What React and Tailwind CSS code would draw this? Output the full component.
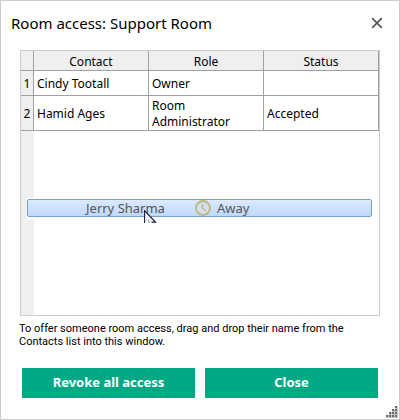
const rows = [
  { contact: "Cindy Tootall", role: "Owner", status: "", height: "h-[25px]" },
  { contact: "Hamid Ages", role: "Room Administrator", status: "Accepted", height: "h-[35px]" },
];

const gripDots = [
  [9, 0],
  [6, 3], [9, 3],
  [3, 6], [6, 6], [9, 6],
  [0, 9], [3, 9], [6, 9], [9, 9],
];

function CloseIcon() {
  return (
    <svg width="12" height="12" viewBox="0 0 12 12" aria-hidden="true">
      <path d="M1.2 1.2L10.8 10.8M10.8 1.2L1.2 10.8" stroke="#555" strokeWidth="1.7" fill="none" />
    </svg>
  );
}

function ClockIcon() {
  return (
    <svg width="16" height="16" viewBox="0 0 16 16" aria-hidden="true">
      <circle cx="8" cy="8" r="7" fill="#d3e0ef" stroke="#bdb879" strokeWidth="1.8" />
      <path d="M7.5 4V8.5L11 11" fill="none" stroke="#bdb879" strokeWidth="1.3" />
    </svg>
  );
}

function Pointer() {
  return (
    <svg className="absolute left-[117px] top-[12px]" width="13" height="13" viewBox="0 0 13 13" aria-hidden="true">
      <path d="M0.5 0.5L11.5 12.5H5L4 10L0.5 13Z" fill="#eef0f8" />
      <path d="M0.5 13V0.5L11.5 12.2H7.500" fill="none" stroke="#222238" strokeWidth="1.2" />
      <path d="M4 10L5.5 13" fill="none" stroke="#8a8a98" strokeWidth="1" />
    </svg>
  );
}

function DragPreview() {
  return (
    <div className="absolute left-[6px] right-[7px] top-[147px] h-[22px] bg-white pt-px">
      <div className="flex h-[18px] items-center rounded-[2px] border border-[#7f9fd3] bg-linear-to-b from-[#dceaff] to-[#bfd8fb] pl-[58px] text-[13px] leading-[16px] text-[#555]">
        <span className="w-[109px]">Jerry Sharma</span>
        <ClockIcon />
        <span className="pl-[6px]">Away</span>
      </div>
      <Pointer />
    </div>
  );
}

function AccessTable() {
  return (
    <table className="w-full table-fixed border-separate border-spacing-0 text-left leading-[16px]">
      <colgroup>
        <col className="w-[13px]" />
        <col />
        <col />
        <col />
      </colgroup>
      <thead>
        <tr className="h-[20px] bg-[#efefef]">
          <td className="border-r border-b border-[#a0a0a0] p-0" />
          {["Contact", "Role", "Status"].map((name) => (
            <th key={name} scope="col" className="border-r border-b border-[#a0a0a0] px-0 pt-[2px] pb-0 text-center font-normal">
              {name}
            </th>
          ))}
        </tr>
      </thead>
      <tbody>
        {rows.map((row, i) => (
          <tr key={row.contact} className={row.height}>
            <th scope="row" className="border-r border-b border-[#a0a0a0] bg-[#efefef] px-0 pt-[2px] pb-0 text-center font-normal">
              {i + 1}
            </th>
            {[row.contact, row.role, row.status].map((text, column) => (
              <td key={column} className="border-r border-b border-[#a0a0a0] pt-[2px] pr-0 pb-0 pl-[3px]">
                {text}
              </td>
            ))}
          </tr>
        ))}
      </tbody>
    </table>
  );
}

export default function App() {
  return (
    <main className="relative flex min-h-screen flex-col border border-[#cccccc] bg-white font-['Noto_Sans',sans-serif] text-[12px] text-black">
      <header className="flex items-center justify-between pt-[9px] pr-[16px] pl-[10px]">
        <h1 className="text-[15px] leading-[26px]">Room access: Support Room</h1>
        <button type="button" aria-label="Close window">
          <CloseIcon />
        </button>
      </header>

      <section className="relative mx-[19px] mt-[14px] flex h-[266px] flex-col border border-[#cccccc]">
        <AccessTable />
        <div className="w-[13px] grow bg-[#efefef]" />
        <DragPreview />
      </section>

      <p className="mt-[6px] mr-[40px] ml-[18px] font-[Roboto,sans-serif] text-[11px] leading-[13px]">
        To offer someone room access, drag and drop their name from the Contacts list into this window.
      </p>

      <div className="mt-[20px] grid grid-cols-2 gap-[10px] px-[21px] text-[13px] font-bold text-white">
        <button type="button" className="h-[30px] bg-[#00a984]">Revoke all access</button>
        <button type="button" className="h-[30px] bg-[#00a984]">Close</button>
      </div>

      <svg className="absolute right-[1px] bottom-[1px]" width="12" height="12" viewBox="0 0 12 12" aria-hidden="true">
        {gripDots.map(([x, y]) => (
          <g key={`${x}-${y}`}>
            <rect x={x} y={y} width="3" height="3" fill="#c8c8c8" />
            <rect x={x} y={y} width="2" height="2" fill="#6a6a6a" />
          </g>
        ))}
      </svg>
    </main>
  );
}
